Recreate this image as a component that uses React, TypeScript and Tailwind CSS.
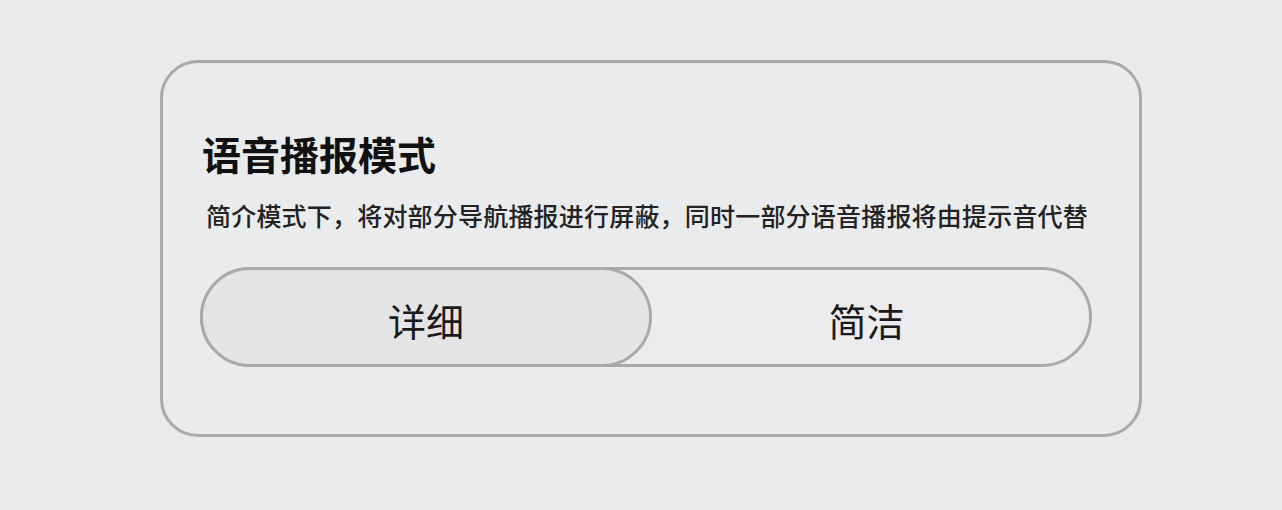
import { useState } from "react";

type Mode = "detail" | "brief";

const MODES: { id: Mode; label: string }[] = [
  { id: "detail", label: "详细" },
  { id: "brief", label: "简洁" },
];

export default function App() {
  const [mode, setMode] = useState<Mode>("detail");

  return (
    <div
      className="flex h-[510px] w-full items-start bg-[#e9eaec] pl-[160px] pt-[60px]"
      style={{ fontFamily: '"Noto Sans CJK SC", "Noto Sans", sans-serif' }}
    >
      <div className="flex h-[377px] w-[982px] flex-col rounded-[38px] border-[3px] border-[#a9a9a9] bg-[#eaebed] px-[37px] pt-[71px]">
        <h1 className="ml-[2px] text-[39px] font-bold leading-none text-[#111]">语音播报模式</h1>
        <p className="ml-[6px] mt-[30px] whitespace-nowrap text-[25px] font-medium leading-none tracking-[0.2px] text-[#222]">
          简介模式下，将对部分导航播报进行屏蔽，同时一部分语音播报将由提示音代替
        </p>

        {/* segmented switch */}
        <div className="mt-[39px] flex h-[100px] w-[892px] rounded-full border-[3px] border-[#a9a9a9] bg-[#ececee]">
          {MODES.map((m) => {
            const active = m.id === mode;
            return (
              <button
                key={m.id}
                onClick={() => setMode(m.id)}
                className={
                  active
                    ? "-my-[3px] flex w-[452px] items-center justify-center rounded-full border-[3px] border-[#a9a9a9] bg-[#e4e4e6] pt-[4px] text-[38px] text-[#1a1a1a] first:-ml-[3px] last:-mr-[3px]"
                    : "flex flex-1 items-center justify-center pr-[8px] pt-[4px] text-[38px] text-[#1a1a1a]"
                }
              >
                {m.label}
              </button>
            );
          })}
        </div>
      </div>
    </div>
  );
}
